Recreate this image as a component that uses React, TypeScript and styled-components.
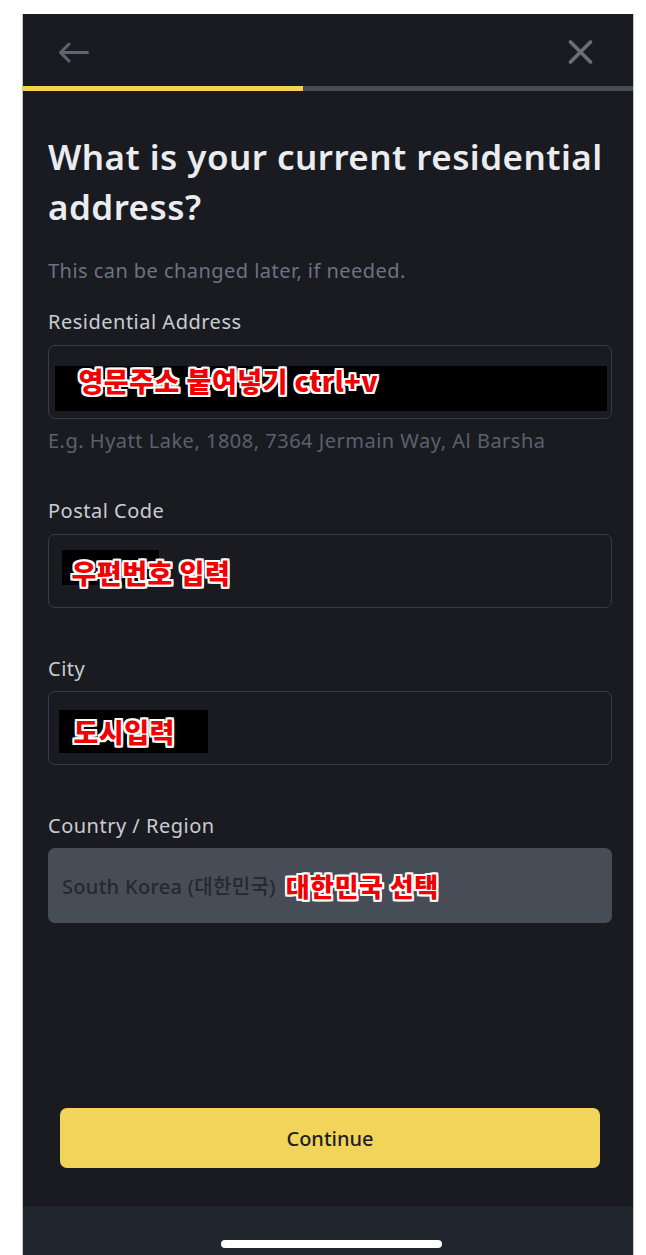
import styled, { createGlobalStyle } from "styled-components";

const GlobalStyle = createGlobalStyle`
  html, body {
    margin: 0;
    padding: 0;
    background: #ffffff;
  }
  body {
    font-family: "Noto Sans", "Noto Sans CJK KR", sans-serif;
    overflow: hidden;
  }
`;

const Page = styled.div`
  height: 1255px;
  box-sizing: border-box;
  padding: 14px 12px 0 22px;
`;

const Screen = styled.div`
  width: 612px;
  height: 1241px;
  box-sizing: border-box;
  background: #1a1b20;
  border-left: 1px solid #c6c6c8;
  border-right: 1px solid #c6c6c8;
  display: flex;
  flex-direction: column;
`;

const Header = styled.header`
  height: 72px;
  box-sizing: border-box;
  padding: 4px 40px 0 35px;
  display: flex;
  justify-content: space-between;
  align-items: center;
`;

const IconButton = styled.button`
  background: none;
  border: 0;
  padding: 0;
  display: flex;
  color: #5f6470;
`;

const Progress = styled.div`
  height: 5px;
  background: #474d57;
  display: flex;
`;

const ProgressFill = styled.div<{ $pct: number }>`
  width: ${(p) => p.$pct}%;
  background: #f3d34f;
`;

const Content = styled.main`
  padding: 41px 21px 0 25px;
  display: flex;
  flex-direction: column;
`;

const Title = styled.h1`
  margin: 0;
  font-size: 35px;
  line-height: 50px;
  font-weight: 600;
  letter-spacing: 0.45px;
  color: #eaecef;
`;

const Subtitle = styled.p`
  margin: 26px 0 0;
  font-size: 20px;
  line-height: 26px;
  letter-spacing: 0.45px;
  color: #6c7382;
`;

const Label = styled.label<{ $gap: number }>`
  margin-top: ${(p) => p.$gap}px;
  font-size: 20px;
  line-height: 26px;
  letter-spacing: 0.5px;
  color: #c9ccd2;
`;

const InputBox = styled.div<{ $gap: number }>`
  margin-top: ${(p) => p.$gap}px;
  height: 74px;
  box-sizing: border-box;
  border: 1.5px solid #3a3d45;
  border-radius: 7px;
  display: flex;
  align-items: flex-start;
`;

const SelectBox = styled.div`
  margin-top: 9px;
  height: 75px;
  box-sizing: border-box;
  padding: 0 14px;
  border-radius: 7px;
  background: #474d57;
  display: flex;
  align-items: center;
  gap: 10px;
`;

const SelectValue = styled.span`
  font-size: 20px;
  font-weight: 500;
  letter-spacing: 0.3px;
  color: #25282e;
`;

const Hint = styled.div`
  margin-top: 9px;
  font-size: 20px;
  line-height: 26px;
  letter-spacing: 0.5px;
  color: #5a616d;
`;

const Redact = styled.div<{
  $x: number;
  $y: number;
  $w: number;
  $h: number;
  $pad: number;
  $shift: number;
}>`
  margin: ${(p) => p.$y}px 0 0 ${(p) => p.$x}px;
  width: ${(p) => p.$w}px;
  height: ${(p) => p.$h}px;
  padding-left: ${(p) => p.$pad}px;
  box-sizing: border-box;
  background: #000;
  display: flex;
  align-items: center;
  white-space: nowrap;
  span {
    transform: translateY(${(p) => p.$shift}px);
  }
`;

const Mark = styled.span<{ $size?: number }>`
  font-family: "Noto Sans CJK KR", "Noto Sans", sans-serif;
  font-weight: 900;
  font-size: ${(p) => p.$size ?? 27}px;
  line-height: 1;
  letter-spacing: 0.5px;
  color: #f00000;
  white-space: nowrap;
  text-shadow: -2px -2px 0 #fff, 2px -2px 0 #fff, -2px 2px 0 #fff,
    2px 2px 0 #fff, 0 -2px 0 #fff, 0 2px 0 #fff, -2px 0 0 #fff, 2px 0 0 #fff;
`;

const Spacer = styled.div`
  flex: 1;
`;

const Footer = styled.div`
  padding: 0 33px 38px 37px;
`;

const ContinueButton = styled.button`
  width: 100%;
  height: 60px;
  border: 0;
  border-radius: 7px;
  background: #f3d45a;
  color: #1e2026;
  font-family: "Noto Sans", sans-serif;
  font-size: 20px;
  font-weight: 500;
`;

const HomeBar = styled.div`
  height: 49px;
  background: #21252d;
  padding-top: 34px;
  box-sizing: border-box;
`;

const HomePill = styled.div`
  margin-left: 198px;
  width: 221px;
  height: 8px;
  border-radius: 4px;
  background: #ffffff;
`;

function BackArrow() {
  return (
    <svg width="31" height="21" viewBox="0 0 31 21" fill="none">
      <path
        d="M29.5 10.5H2.5M11 2L2.5 10.5L11 19"
        stroke="currentColor"
        strokeWidth="3"
        strokeLinecap="round"
        strokeLinejoin="round"
      />
    </svg>
  );
}

function CloseIcon() {
  return (
    <svg width="25" height="24" viewBox="0 0 25 24" fill="none">
      <path
        d="M2.5 2L22.5 22M22.5 2L2.5 22"
        stroke="#6b6f78"
        strokeWidth="3.6"
        strokeLinecap="round"
      />
    </svg>
  );
}

export default function App() {
  return (
    <>
      <GlobalStyle />
      <Page>
        <Screen>
          <Header>
            <IconButton>
              <BackArrow />
            </IconButton>
            <IconButton>
              <CloseIcon />
            </IconButton>
          </Header>
          <Progress>
            <ProgressFill $pct={45.9} />
          </Progress>

          <Content>
            <Title>What is your current residential address?</Title>
            <Subtitle>This can be changed later, if needed.</Subtitle>

            <Label $gap={25}>Residential Address</Label>
            <InputBox $gap={10}>
              <Redact $x={5.5} $y={19.5} $w={552} $h={45} $pad={24} $shift={-8}>
                <Mark>영문주소 붙여넣기 ctrl+v</Mark>
              </Redact>
            </InputBox>
            <Hint>E.g. Hyatt Lake, 1808, 7364 Jermain Way, Al Barsha</Hint>

            <Label $gap={44}>Postal Code</Label>
            <InputBox $gap={10}>
              <Redact $x={13} $y={14.5} $w={97} $h={35} $pad={9.5} $shift={5}>
                <Mark>우편번호 입력</Mark>
              </Redact>
            </InputBox>

            <Label $gap={48}>City</Label>
            <InputBox $gap={9}>
              <Redact $x={9.5} $y={17.5} $w={149} $h={43} $pad={15} $shift={0}>
                <Mark>도시입력</Mark>
              </Redact>
            </InputBox>

            <Label $gap={48}>Country / Region</Label>
            <SelectBox>
              <SelectValue>South Korea (대한민국)</SelectValue>
              <Mark $size={26}>대한민국 선택</Mark>
            </SelectBox>
          </Content>

          <Spacer />
          <Footer>
            <ContinueButton>Continue</ContinueButton>
          </Footer>
          <HomeBar>
            <HomePill />
          </HomeBar>
        </Screen>
      </Page>
    </>
  );
}
